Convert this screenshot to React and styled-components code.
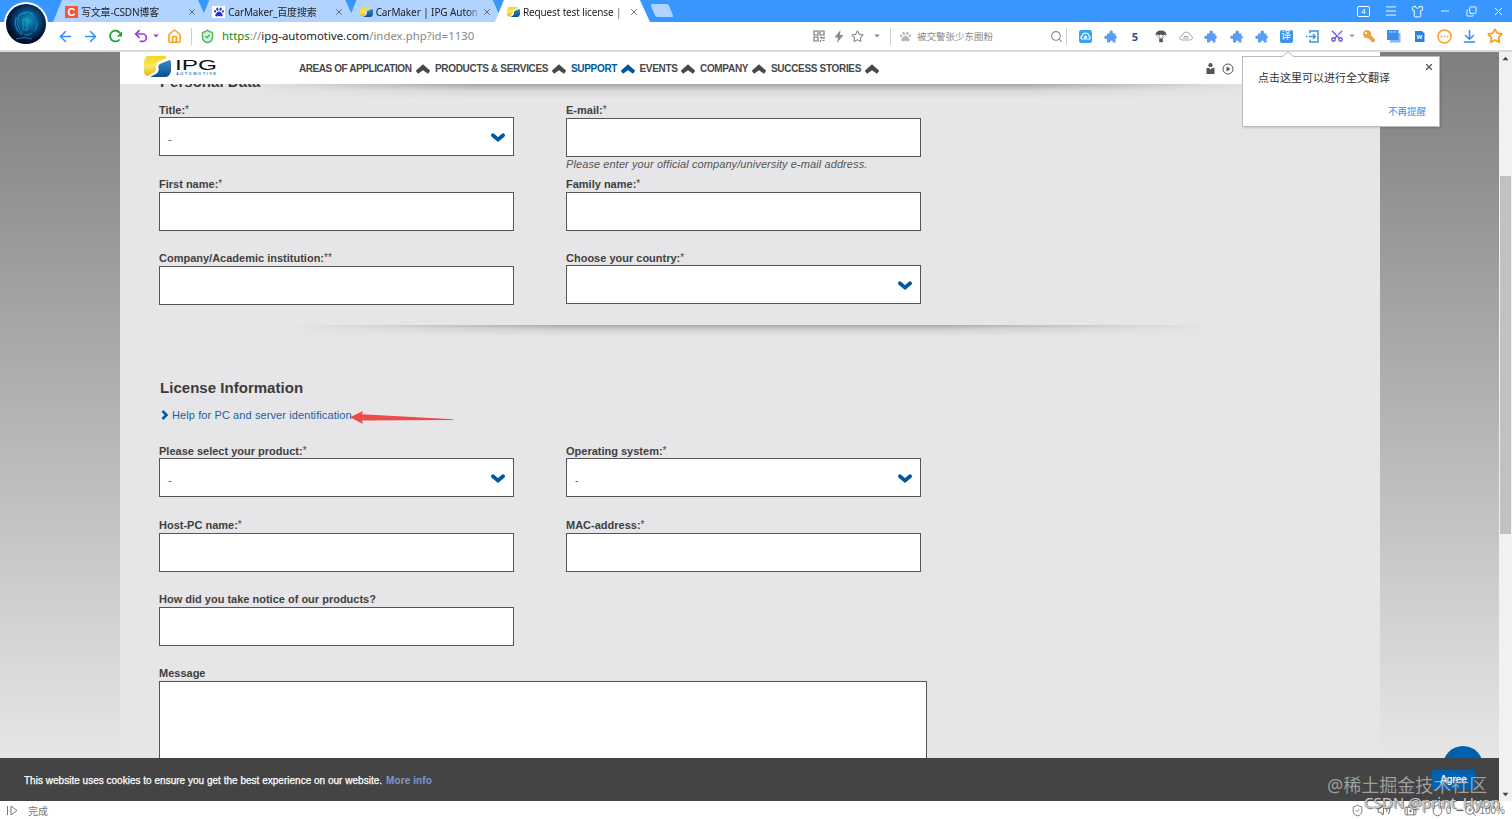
import React from 'react'
import styled, { createGlobalStyle } from 'styled-components'
import { ArrowLeft, ArrowRight, Undo2, Star, Search, Scissors, Shirt, Menu, Minus, X, Copy, House, ShieldCheck, Shield, ZoomIn, Volume2, BriefcaseMedical } from 'lucide-react'
import { FaKey, FaPaw } from 'react-icons/fa'

const tabs = [
  { title: '写文章-CSDN博客', icon: 'csdn', spacing: -0.2 },
  { title: 'CarMaker_百度搜索', icon: 'baidu', spacing: -0.15 },
  { title: 'CarMaker | IPG Autom', icon: 'ipg', spacing: -0.1 },
  { title: 'Request test license |', icon: 'ipg', active: true, spacing: -0.14 },
]

const navItems = [
  { label: 'AREAS OF APPLICATION', width: 136, spacing: -0.43 },
  { label: 'PRODUCTS & SERVICES', width: 136, spacing: -0.32 },
  { label: 'SUPPORT', width: 68.5, active: true, spacing: -0.32 },
  { label: 'EVENTS', width: 60.5, spacing: -0.32 },
  { label: 'COMPANY', width: 71, spacing: -0.32 },
  { label: 'SUCCESS STORIES', width: 113, spacing: -0.32 },
]

const IpgMark = ({ size = 13 }) => (
  <svg width={size} height={size * 0.78} viewBox="0 0 27 21">
    <defs>
      <linearGradient id="ipgYellow" x1="0" y1="0" x2="0" y2="1">
        <stop offset="0" stopColor="#efd826" />
        <stop offset=".5" stopColor="#f9e75c" />
        <stop offset="1" stopColor="#e8b81c" />
      </linearGradient>
      <linearGradient id="ipgBlue" x1="0" y1="0" x2="0" y2="1">
        <stop offset="0" stopColor="#3b8cc9" />
        <stop offset="1" stopColor="#05508e" />
      </linearGradient>
    </defs>
    <path d="M4 0H21Q24 1 22 2.5L15 5.5Q11.5 7 12 11Q13 15 9 17L4 20Q0 20 0 15V6Q1 0 4 0Z" fill="url(#ipgYellow)" />
    <path d="M25.5 4Q27 4.5 27 7V15Q26 21 21 21H6L11 18.5Q15.5 16 14.5 12Q13.5 8.5 18 7Z" fill="url(#ipgBlue)" />
  </svg>
)

const TabIcon = ({ type }) => {
  if (type === 'csdn') return <CsdnIcon>C</CsdnIcon>
  if (type === 'baidu') return <BaiduIcon><FaPaw size={10} /></BaiduIcon>
  return <IpgMark />
}

const NavArrow = ({ color }) => (
  <svg width="16" height="10" viewBox="0 0 16 10">
    <path d="M8 .2L15.2 6.8L13 9.8L8 6.2L3 9.8L.8 6.8Z" fill={color} />
  </svg>
)

const SelectArrow = () => (
  <svg width="16" height="13" viewBox="0 0 16 13">
    <path d="M2.9 5.2L8 9.6L13.1 5.2" fill="none" stroke="#00599f" strokeWidth="3.8" strokeLinecap="round" />
  </svg>
)

const Field = ({ label, star, value, select, hint }) => (
  <FieldBox>
    <Label>{label}{star && <sup>{star}</sup>}</Label>
    <Control $select={select}>
      <span>{value}</span>
      {select && <SelectArrow />}
    </Control>
    {hint && <Hint>{hint}</Hint>}
  </FieldBox>
)

const TopTabs = () => (
  <TabBar>
    {tabs.map((tab, i) => (
      <Tab key={i} $active={tab.active}>
        <TabIcon type={tab.icon} />
        <TabTitle $spacing={tab.spacing}>{tab.title}</TabTitle>
        <X size={10} strokeWidth={2} color="#555" />
      </Tab>
    ))}
    <NewTab />
    <WindowButtons>
      <Slot $w={27}><TabCount>4</TabCount></Slot>
      <Slot $w={27}><Menu size={14} strokeWidth={1.6} /></Slot>
      <Slot $w={27}><Shirt size={13} strokeWidth={1.8} /></Slot>
      <Slot $w={27}><Minus size={12} strokeWidth={1.8} /></Slot>
      <Slot $w={27}><Flip><Copy size={11} strokeWidth={2} /></Flip></Slot>
      <Slot $w={27}><X size={13} strokeWidth={1.8} /></Slot>
    </WindowButtons>
  </TabBar>
)

const Caret = ({ color }) => (
  <svg width="6" height="4" viewBox="0 0 6 4"><path d="M.3 .5H5.7L3 3.5Z" fill={color} /></svg>
)

const Puzzle = () => (
  <svg width="13" height="13" viewBox="0 0 13 13" fill="#5b9df0">
    <path d="M3 3.5H5.6Q5 .6 7.2 .5Q9.4 .6 8.8 3.5H11.5V6Q13 6 13 7.2Q13 8.4 11.5 8.4V12.5H8.9Q9 10.6 7.4 10.6Q5.8 10.6 5.9 12.5H3V9Q.2 9.6 .2 7.3Q.2 5.2 3 5.7Z" />
  </svg>
)

const Toolbar = () => (
  <ToolRow>
    <Slot $w={25}><ArrowLeft size={17} color="#2f8df5" strokeWidth={2.1} /></Slot>
    <Slot $w={25}><ArrowRight size={17} color="#2f8df5" strokeWidth={2.1} /></Slot>
    <Slot $w={25}>
      <svg width="15" height="14" viewBox="0 0 15 14">
        <path d="M12 4.2A5.4 5.4 0 1 0 11.6 10.5" fill="none" stroke="#12a832" strokeWidth="1.8" />
        <path d="M14 2.6V7.4H8.9Z" fill="#12a832" />
      </svg>
    </Slot>
    <Slot $w={25}><Undo2 size={16} color="#9a3be0" strokeWidth={2.6} /></Slot>
    <Slot $w={5}><Caret color="#9a3be0" /></Slot>
    <Slot $w={33}><House size={15} color="#f9a01b" strokeWidth={2.4} /></Slot>
    <Divider />
    <Slot $w={31}><ShieldCheck size={15} color="#45b558" fill="#d9f1dc" strokeWidth={2.2} /></Slot>
    <Url><b>https</b>://<i>ipg-automotive.com</i>/index.php?id=1130</Url>
    <Slot $w={20}>
      <svg width="12" height="12" viewBox="0 0 12 12" fill="none" stroke="#777" strokeWidth="1.2">
        <path d="M1 1H5V5H1ZM7 1H11V5H7ZM1 7H5V11H1ZM7 7.5H9V9M11 6.5V9M7.5 10V12M9.5 10.5H11.5" />
      </svg>
    </Slot>
    <Slot $w={19}>
      <svg width="10" height="13" viewBox="0 0 10 13"><path d="M6.5 0L.5 7.5H4L3 13L9.5 5H6Z" fill="#8b8b8b" /></svg>
    </Slot>
    <Slot $w={19}><Star size={13} color="#888" strokeWidth={2} /></Slot>
    <Slot $w={20}><Caret color="#888" /></Slot>
    <Slot $w={6}><Divider /></Slot>
    <Slot $w={24}><FaPaw size={11} color="#b5b5b5" /></Slot>
    <SearchText>被交警张少东圈粉</SearchText>
    <Slot $w={20}><Search size={13} color="#888" strokeWidth={2} /></Slot>
    <Divider />
    <Slot $w={36}>
      <svg width="13" height="13" viewBox="0 0 13 13">
        <rect width="13" height="13" rx="2.5" fill="#35a3f8" />
        <path d="M2.5 9Q1 7 3 6Q3.5 3 6.5 3Q9.5 3 10 6Q12 7 10.5 9Z" fill="none" stroke="#fff" strokeWidth="1.1" />
        <circle cx="6.5" cy="7" r="1.5" fill="#fff" />
      </svg>
    </Slot>
    <Slot $w={15}><Puzzle /></Slot>
    <Slot $w={34}><Five>5</Five></Slot>
    <Slot $w={17}>
      <svg width="12" height="13" viewBox="0 0 12 13">
        <path d="M.3 5.2Q.8 .8 6 .6Q11.2 .8 11.7 5.2L10 4.6L8 5.4L6 4.6L4 5.4L2 4.6Z" fill="#555" />
        <path d="M1 5.2L5 9M11 5.2L7 9M4 5.4L5.5 9M8 5.4L6.5 9" stroke="#777" strokeWidth=".6" />
        <rect x="4.2" y="8.6" width="3.6" height="3.6" fill="#555" />
      </svg>
    </Slot>
    <Slot $w={33}>
      <svg width="14" height="10" viewBox="0 0 14 10" fill="none" stroke="#aaa">
        <path d="M3 9Q.5 9 .6 6.8Q1 4.7 3.3 4.7Q4 1 7.4 1Q10.7 1 11 4Q13.6 4.7 13.4 7Q13 9 11 9Z" />
        <path d="M4 7H10M5 5.5H9" />
      </svg>
    </Slot>
    <Slot $w={17}><Puzzle /></Slot>
    <Slot $w={34}><Puzzle /></Slot>
    <Slot $w={16}><Puzzle /></Slot>
    <Slot $w={34}><Translate>译</Translate></Slot>
    <Slot $w={18}>
      <svg width="13" height="13" viewBox="0 0 13 13" fill="none" stroke="#3d93ec" strokeWidth="1.5">
        <path d="M4 3.5V1H12V12H4V9.5M3 6.5H9M7 4L9.3 6.5L7 9M0 6.5H1.6" />
      </svg>
    </Slot>
    <Slot $w={31}><Turn><Scissors size={14} color="#6558dc" strokeWidth={2.3} /></Turn></Slot>
    <CaretHold><Caret color="#999" /></CaretHold>
    <Slot $w={33}><Mirror><FaKey size={12} color="#eba447" /></Mirror></Slot>
    <Slot $w={18}>
      <svg width="14" height="13" viewBox="0 0 14 13">
        <path d="M3 3H13.5V12.5H3Z" fill="#83b9f5" /><path d="M0 0H11.5V10H0Z" fill="#3b8eee" />
        <path d="M2 2H10" stroke="#fff" strokeDasharray="1 1" />
      </svg>
    </Slot>
    <Slot $w={32}>
      <svg width="11" height="13" viewBox="0 0 11 13">
        <path d="M1 1H8L10.5 3.5V12H1Z" fill="#2583e8" />
        <text x="5.5" y="9.4" fontSize="7" fontWeight="700" textAnchor="middle" fill="#fff">w</text>
      </svg>
    </Slot>
    <Slot $w={19}>
      <svg width="15" height="15" viewBox="0 0 15 15">
        <circle cx="7.5" cy="7.5" r="6.5" fill="none" stroke="#f8a12a" strokeWidth="1.5" />
        <path d="M3.7 7.5H11.5" stroke="#f8a12a" strokeWidth="1.6" strokeDasharray="1.6 1.4" />
      </svg>
    </Slot>
    <Slot $w={31}>
      <svg width="13" height="13" viewBox="0 0 13 13" fill="none" stroke="#2f8df5" strokeWidth="1.5">
        <path d="M6.5 0V9M2 5L6.5 9.3L11 5M.8 12H12.2" />
      </svg>
    </Slot>
    <Slot $w={19}><Star size={16} color="#f9a01b" strokeWidth={2.6} /></Slot>
  </ToolRow>
)

const App = () => (
  <Screen>
    <GlobalStyle />
    <TopTabs />
    <Avatar>
      <svg width="40" height="40" viewBox="0 0 40 40">
        <defs>
          <radialGradient id="orb" cx=".55" cy=".42" r=".58">
            <stop offset="0" stopColor="#109dc0" />
            <stop offset=".4" stopColor="#07578a" />
            <stop offset=".8" stopColor="#04183b" />
            <stop offset="1" stopColor="#020b20" />
          </radialGradient>
        </defs>
        <circle cx="20" cy="20" r="20" fill="url(#orb)" />
        <g fill="none" stroke="#21a3d2" strokeWidth="1" opacity=".7">
          <path d="M10 13Q7 24 16 31M13 11Q9 22 17 30M12 12Q20 5 27 10M17 15H21V26H17ZM10 35Q18 32 26 35" />
          <circle cx="20" cy="20" r="11" strokeDasharray="8 3" />
        </g>
      </svg>
    </Avatar>
    <Toolbar />
    <Viewport>
      <Page>
        <Sheet>
          <SiteHeader>
            <Logo>
              <IpgMark size={27} />
              <svg width="44" height="21" viewBox="0 0 44 21">
                <text x="1" y="14" fontSize="14.5" fontFamily="Liberation Sans, sans-serif" fill="#111" textLength="42" lengthAdjust="spacingAndGlyphs">IPG</text>
                <text x="2" y="19" fontSize="4" fontWeight="700" fontFamily="Liberation Sans, sans-serif" fill="#3a80b8" textLength="40">AUTOMOTIVE</text>
              </svg>
            </Logo>
            <Nav>
              {navItems.map(item => (
                <NavItem key={item.label} $w={item.width} $active={item.active} $spacing={item.spacing}>
                  {item.label}
                  <NavArrow color={item.active ? '#00599f' : '#484848'} />
                </NavItem>
              ))}
            </Nav>
            <HeaderIcons>
              <svg width="9" height="11" viewBox="0 0 9 11" fill="#555"><circle cx="4.5" cy="2.2" r="2.1" /><path d="M.5 5H3L4.5 6.5L6 5H8.5V11H.5Z" /></svg>
              <svg width="12" height="12" viewBox="0 0 12 12"><circle cx="6" cy="6" r="5" fill="none" stroke="#555" /><path d="M4.5 3.5L8.5 6L4.5 8.5Z" fill="#555" /></svg>
            </HeaderIcons>
          </SiteHeader>
          <Form>
            <HeaderShade />
            <CutTitle>Personal Data</CutTitle>
            <Fields>
              <Field label="Title:" star="*" value="-" select />
              <Field label="E-mail:" star="*" hint="Please enter your official company/university e-mail address." />
              <Field label="First name:" star="*" />
              <Field label="Family name:" star="*" />
              <Field label="Company/Academic institution:" star="**" />
              <Field label="Choose your country:" star="*" select />
            </Fields>
            <Separator />
            <SectionTitle>License Information</SectionTitle>
            <HelpLink>
              <svg width="8" height="10" viewBox="0 0 8 10"><path d="M1.5 1L5.5 5L1.5 9" fill="none" stroke="#00599f" strokeWidth="2.6" /></svg>
              <span>Help for PC and server identification</span>
              <RedArrow width="104" height="14" viewBox="0 0 104 14"><path d="M0 6.3L13 0L12 3.2L103 8.2V9L12 9.5L13 13Z" fill="#ec4b4a" /></RedArrow>
            </HelpLink>
            <Fields>
              <Field label="Please select your product:" star="*" value="-" select />
              <Field label="Operating system:" star="*" value="-" select />
              <Field label="Host-PC name:" star="*" />
              <Field label="MAC-address:" star="*" />
              <Field label="How did you take notice of our products?" />
            </Fields>
            <Label>Message</Label>
            <Message />
          </Form>
        </Sheet>
        <TopButton />
        <CookieBar>
          <CookieText>This website uses cookies to ensure you get the best experience on our website.</CookieText>
          <MoreInfo>More info</MoreInfo>
          <Agree>Agree</Agree>
        </CookieBar>
      </Page>
      <ScrollTrack>
        <svg width="7" height="5" viewBox="0 0 7 5"><path d="M.5 4.3H6.5L3.5 .8Z" fill="#444" /></svg>
        <ScrollThumb />
        <svg width="7" height="5" viewBox="0 0 7 5"><path d="M.5 .7H6.5L3.5 4.2Z" fill="#444" /></svg>
      </ScrollTrack>
    </Viewport>
    <StatusBar>
      <svg width="13" height="11" viewBox="0 0 13 11" fill="none" stroke="#777"><path d="M1.5 1V10M5 1L11 5.5L5 10Z" /></svg>
      <StatusText>完成</StatusText>
      <StatusRight>
        <Slot $w={36}><ShieldCheck size={13} strokeWidth={1.8} /></Slot>
        <Slot $w={16}><Volume2 size={14} strokeWidth={1.8} /></Slot>
        <Slot $w={38}><BriefcaseMedical size={13} strokeWidth={1.8} /></Slot>
        <Slot $w={16}><Shield size={13} strokeWidth={1.8} /></Slot>
        <span>0</span>
        <Slot $w={16}><Minus size={9} /></Slot>
        <Slot $w={6}><ZoomIn size={13} strokeWidth={1.8} /></Slot>
        <Percent>100%</Percent>
      </StatusRight>
    </StatusBar>
    <Popover>
      <PopArrow width="12" height="6" viewBox="0 0 12 6"><path d="M0 6L6 .8L12 6" fill="#fff" stroke="#b5b5b5" /></PopArrow>
      <PopText>点击这里可以进行全文翻译</PopText>
      <PopClose><X size={10} strokeWidth={2.8} /></PopClose>
      <PopLink>不再提醒</PopLink>
    </Popover>
    <Juejin>@稀土掘金技术社区</Juejin>
    <Csdn>CSDN @print_Hyon</Csdn>
  </Screen>
)

const GlobalStyle = createGlobalStyle`
  *{
    box-sizing:border-box;
  }
  body{
    margin:0;
    overflow:hidden;
    font-family:"Liberation Sans", "Noto Sans CJK SC", sans-serif;
  }
  svg{
    display:block;
    flex-shrink:0;
  }
`

const Screen = styled.div`
  position:relative;
  display:flex;
  flex-direction:column;
  width:1512px;
  height:819px;
  overflow:hidden;
  background:white;
`

const TabBar = styled.div`
  display:flex;
  height:22px;
  padding-left:53px;
  background:#3797ff;
`

const Tab = styled.div`
  display:flex;
  align-items:center;
  width:155px;
  height:22px;
  margin-right:-7.7px;
  padding:2px 11px 0 12px;
  flex-shrink:0;
  clip-path:polygon(0 100%, 9px 0, 145px 0, 100% 100%);
  background:${props => props.$active ? 'white' : '#b1d3ff'};
`

const TabTitle = styled.div`
  width:101px;
  flex-shrink:0;
  margin:0 5px 0 3px;
  white-space:nowrap;
  color:#222;
  font:10px/18px "Noto Sans", "Noto Sans CJK SC", sans-serif;
  letter-spacing:${props => props.$spacing}px;
  mask-image:linear-gradient(to right, black 92px, rgba(0,0,0,0.3) 101px);
`

const CsdnIcon = styled.div`
  width:13px;
  height:12px;
  flex-shrink:0;
  background:#f2553a;
  color:white;
  font-weight:700;
  font-size:11px;
  line-height:12px;
  text-align:center;
`

const BaiduIcon = styled.div`
  display:flex;
  align-items:center;
  justify-content:center;
  width:13px;
  height:12px;
  flex-shrink:0;
  background:white;
  color:#2a33d0;
`

const NewTab = styled.div`
  width:18px;
  height:13px;
  margin:4px 0 0 11px;
  transform:skewX(22deg);
  border-radius:2px;
  background:#b1d3ff;
`

const WindowButtons = styled.div`
  display:flex;
  align-items:center;
  margin-left:auto;
  color:white;
`

const TabCount = styled.div`
  width:13px;
  height:11px;
  border:1px solid white;
  border-radius:2px;
  font-size:8px;
  line-height:9px;
  text-align:center;
`

const Slot = styled.div`
  display:flex;
  align-items:center;
  justify-content:center;
  flex-shrink:0;
  width:${props => props.$w}px;
`

const Flip = styled.div`
  transform:scaleY(-1);
`

const Mirror = styled.div`
  transform:scaleX(-1);
`

const Turn = styled.div`
  transform:rotate(-90deg);
`

const Avatar = styled.div`
  position:absolute;
  z-index:2;
  left:4px;
  top:2px;
  width:44px;
  height:44px;
  padding:2px;
  border-radius:50%;
  background:white;
`

const ToolRow = styled.div`
  display:flex;
  align-items:center;
  height:30px;
  padding-left:53px;
  border-bottom:2px solid #d9d9d9;
`

const Divider = styled.div`
  width:1px;
  height:17px;
  flex-shrink:0;
  background:#ccc;
`

const Url = styled.div`
  width:587px;
  margin-left:-1px;
  flex-shrink:0;
  white-space:nowrap;
  color:#888;
  font:11.4px/20px "Noto Sans", sans-serif;

  b{
    font-weight:400;
    color:#16870f;
  }
  i{
    font-style:normal;
    color:#222;
  }
`

const SearchText = styled.div`
  width:129px;
  flex-shrink:0;
  white-space:nowrap;
  color:#888;
  font-size:9.5px;
`

const Five = styled.span`
  color:#2b4c92;
  font:700 11px "Noto Sans", sans-serif;
`

const Translate = styled.div`
  width:13px;
  height:13px;
  border-radius:2px;
  background:#3d93ec;
  color:white;
  font-size:10px;
  line-height:12px;
  text-align:center;
`

const CaretHold = styled.div`
  width:6px;
  margin:0 -3px;
`

const Viewport = styled.div`
  display:flex;
  height:749px;
`

const Page = styled.div`
  position:relative;
  display:flex;
  flex-direction:column;
  width:1499px;
  background:linear-gradient(#7e7e7e, #e6e6e6 94%);
`

const Sheet = styled.div`
  display:flex;
  flex-direction:column;
  width:1260px;
  height:706px;
  margin-left:120px;
  background:#e6e6e8;
`

const SiteHeader = styled.div`
  display:flex;
  align-items:center;
  height:32px;
  flex-shrink:0;
  background:white;
`

const Logo = styled.div`
  display:flex;
  align-items:flex-start;
  gap:3px;
  width:179px;
  padding:0 0 3px 24px;
`

const Nav = styled.div`
  display:flex;
  align-items:center;
  width:907px;
  padding-top:1px;
`

const NavItem = styled.div`
  display:flex;
  align-items:center;
  justify-content:space-between;
  width:${props => props.$w}px;
  padding-right:4px;
  white-space:nowrap;
  font-size:10px;
  font-weight:700;
  letter-spacing:${props => props.$spacing}px;
  color:${props => props.$active ? '#00599f' : '#484848'};
`

const HeaderIcons = styled.div`
  display:flex;
  align-items:center;
  gap:7px;
  padding-top:1px;
`

const Form = styled.div`
  position:relative;
  flex:1;
  padding-left:39px;
  overflow:hidden;
`

const HeaderShade = styled.div`
  position:absolute;
  left:130px;
  top:0;
  width:1000px;
  height:15px;
  background:linear-gradient(rgba(110,115,115,0.55), rgba(140,145,145,0.15) 45%, transparent);
  mask-image:linear-gradient(to right, transparent, black 22%, black 78%, transparent);
`

const CutTitle = styled.h2`
  height:26px;
  margin:-9px 0 0;
  padding-left:1px;
  color:#3c3c3c;
  font-size:15px;
  line-height:14px;
  letter-spacing:0.03px;
`

const Fields = styled.div`
  display:grid;
  grid-template-columns:355px 355px;
  column-gap:52px;
  grid-auto-rows:74px;
`

const FieldBox = styled.div`
  display:flex;
  flex-direction:column;
`

const Label = styled.label`
  display:block;
  height:17px;
  flex-shrink:0;
  color:#3f3f3f;
  font-size:11px;
  font-weight:700;
  line-height:19px;

  sup{
    font-size:10px;
    line-height:0;
    vertical-align:1px;
    font-weight:400;
  }
`

const Control = styled.div`
  display:flex;
  align-items:center;
  justify-content:space-between;
  height:39px;
  flex-shrink:0;
  margin-top:${props => props.$select ? '-1px' : '0'};
  padding:0 7px 0 8px;
  border:1px solid #555;
  background:white;
  color:#555;
  font-size:11px;

  span{
    padding-top:4px;
  }
`

const Hint = styled.em`
  color:#555;
  font-size:11px;
  line-height:14px;
  white-space:nowrap;
  letter-spacing:0.09px;
`

const Separator = styled.div`
  width:920px;
  height:14px;
  margin:2px 0 40px 132px;
  background:linear-gradient(#a5a8a8, #ccced0 30%, #e0e2e3 70%, #e6e6e8);
  mask-image:linear-gradient(to right, transparent, black 30%, black 70%, transparent);
`

const SectionTitle = styled.h2`
  margin:0;
  padding-left:1px;
  color:#3c3c3c;
  font-size:15px;
  line-height:18px;
  letter-spacing:0.03px;
`

const HelpLink = styled.div`
  position:relative;
  display:flex;
  align-items:center;
  gap:3px;
  height:20px;
  margin:8px 0 17px;
  padding-left:2px;
  color:#1a60a3;
  font-size:11px;
  letter-spacing:0.1px;
`

const RedArrow = styled.svg`
  position:absolute;
  left:191px;
  top:6px;
`

const Message = styled.div`
  width:768px;
  height:100px;
  border:1px solid #555;
  background:white;
`

const TopButton = styled.div`
  position:absolute;
  left:1443px;
  top:694px;
  width:40px;
  height:40px;
  border-radius:50%;
  background:#0060ad;
`

const CookieBar = styled.div`
  position:relative;
  display:flex;
  align-items:center;
  height:43px;
  padding:1px 24px 0;
  background:#444;
  font-size:10px;
`

const CookieText = styled.span`
  margin-right:4px;
  color:white;
  letter-spacing:0.015px;
  -webkit-text-stroke:0.25px white;
`

const MoreInfo = styled.span`
  color:#8494cf;
  font-weight:700;
  letter-spacing:0.1px;
`

const Agree = styled.div`
  width:43px;
  height:20px;
  margin-left:auto;
  background:#0060ad;
  color:white;
  line-height:20px;
  text-align:center;
  -webkit-text-stroke:0.25px white;
`

const ScrollTrack = styled.div`
  display:flex;
  flex-direction:column;
  align-items:center;
  justify-content:space-between;
  width:13px;
  padding:4px 0;
  background:#f1f1f1;
`

const ScrollThumb = styled.div`
  width:11px;
  height:358px;
  margin-bottom:143px;
  background:#c1c1c1;
`

const StatusBar = styled.div`
  display:flex;
  align-items:center;
  height:18px;
  padding-left:6px;
  color:#777;
  font-size:10px;
`

const StatusText = styled.span`
  margin-left:9px;
`

const StatusRight = styled.div`
  display:flex;
  align-items:center;
  margin-left:auto;
  padding-right:7px;
`

const Percent = styled.span`
  margin-left:6px;
`

const Popover = styled.div`
  position:absolute;
  left:1242px;
  top:56px;
  width:198px;
  height:71px;
  padding:13px 13px 0 15px;
  border:1px solid #bbb;
  background:white;
  box-shadow:1px 1px 2px rgba(0,0,0,0.15);
`

const PopArrow = styled.svg`
  position:absolute;
  left:39px;
  top:-6px;
`

const PopText = styled.div`
  color:#333;
  font-size:11px;
  line-height:17px;
  white-space:nowrap;
`

const PopClose = styled.div`
  position:absolute;
  right:5px;
  top:5px;
  color:#555;
`

const PopLink = styled.div`
  margin-top:18px;
  color:#3290f5;
  font-size:9.5px;
  line-height:14px;
  text-align:right;
`

const Juejin = styled.div`
  position:absolute;
  left:1327px;
  top:773px;
  white-space:nowrap;
  font:18px/24px "Noto Sans", "Noto Sans CJK SC", sans-serif;
  color:rgba(190,190,190,0.75);
`

const Csdn = styled.div`
  position:absolute;
  left:1364px;
  top:793px;
  white-space:nowrap;
  font:15.1px/18px "Noto Sans", sans-serif;
  color:rgba(225,225,225,0.85);
  text-shadow:0 0 1px #555, 1px 1px 1px rgba(60,60,60,0.7);
`

export default App
